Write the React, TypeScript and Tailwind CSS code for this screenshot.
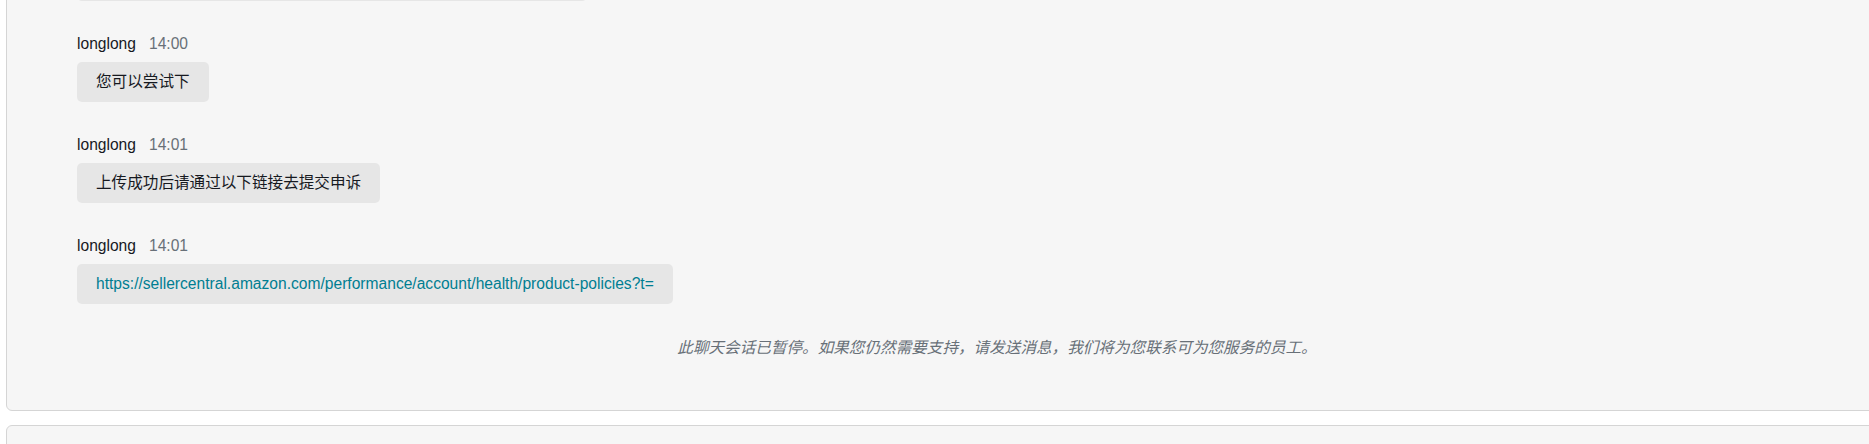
const font = {
  fontFamily: '"Liberation Sans", Arial, "Noto Sans CJK SC", sans-serif',
};

type Msg = {
  name: string;
  time: string;
  text: string;
  link?: boolean;
};

const messages: Msg[] = [
  { name: "longlong", time: "14:00", text: "您可以尝试下" },
  { name: "longlong", time: "14:01", text: "上传成功后请通过以下链接去提交申诉" },
  {
    name: "longlong",
    time: "14:01",
    text: "https://sellercentral.amazon.com/performance/account/health/product-policies?t=",
    link: true,
  },
];

function Message({ msg }: { msg: Msg }) {
  return (
    <div className="flex flex-col items-start mb-[34px] last:mb-0">
      {/* name + time */}
      <div className="flex h-[18px] items-center gap-[13px] leading-[18px]">
        <span className="text-[#16191f]">{msg.name}</span>
        <span className="text-[#687078]">{msg.time}</span>
      </div>
      <div className="mt-[9px] flex h-[40px] items-center rounded-[5px] bg-[#e6e6e6] px-[19px] leading-[20px]">
        {msg.link ? (
          <a className="text-[#007e92]" href="#">
            {msg.text}
          </a>
        ) : (
          <span className="whitespace-nowrap text-[#16191f]">{msg.text}</span>
        )}
      </div>
    </div>
  );
}

export default function App() {
  return (
    <div className="h-[444px] w-full overflow-hidden bg-white text-[15.6px]" style={font}>
      {/* chat panel, scrolled so the earlier bubble is mostly out of view */}
      <div className="-mt-[20px] ml-[6px] w-[1982px] rounded-[6px] border border-[#d5d5d5] bg-[#f6f6f6] pb-[52px] pl-[70px]">
        <div className="mb-[34px] h-[20px] w-[510px] rounded-b-[5px] bg-[#e6e6e6]" />
        {messages.map((m, i) => (
          <Message key={i} msg={m} />
        ))}
        <p className="mt-[32px] -ml-[70px] text-center italic leading-[20px] text-[#687078]">
          此聊天会话已暂停。如果您仍然需要支持，请发送消息，我们将为您联系可为您服务的员工。
        </p>
      </div>

      {/* next panel */}
      <div className="ml-[6px] mt-[14px] h-[60px] w-[1982px] rounded-[6px] border border-[#d5d5d5] bg-[#f6f6f6]" />
    </div>
  );
}
